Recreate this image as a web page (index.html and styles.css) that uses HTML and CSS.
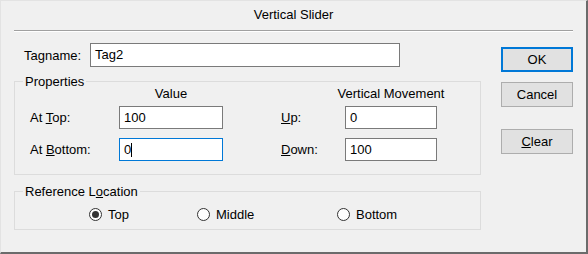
FILE: index.html
```html
<!DOCTYPE html>
<html>
<head>
<meta charset="utf-8">
<link rel="stylesheet" href="styles.css">
</head>
<body>
<div class="window">
  <div class="titlebar">Vertical Slider</div>
  <div class="main">
    <div class="left">
      <div class="tagrow">
        <span class="tag-label">Tagname:</span>
        <div class="field field-tag">Tag2</div>
      </div>
      <div class="group group-props">
        <span class="legend">Properties</span>
        <div class="props-grid">
          <span></span>
          <span class="colhead">Value</span>
          <span></span>
          <span></span>
          <span class="colhead">Vertical Movement</span>

          <span class="lbl">At <u>T</u>op:</span>
          <div class="field">100</div>
          <span></span>
          <span class="lbl"><u>U</u>p:</span>
          <div class="field">0</div>

          <span class="lbl">At <u>B</u>ottom:</span>
          <div class="field field-focus">0<span class="caret"></span></div>
          <span></span>
          <span class="lbl"><u>D</u>own:</span>
          <div class="field">100</div>
        </div>
      </div>
      <div class="group group-ref">
        <span class="legend">Reference L<u>o</u>cation</span>
        <div class="radios">
          <div class="radio radio-top"><span class="radio-dot checked"></span><span>Top</span></div>
          <div class="radio radio-mid"><span class="radio-dot"></span><span>Middle</span></div>
          <div class="radio"><span class="radio-dot"></span><span>Bottom</span></div>
        </div>
      </div>
    </div>
    <div class="buttons">
      <div class="btn btn-ok">OK</div>
      <div class="btn btn-cancel">Cancel</div>
      <div class="btn btn-clear"><u>C</u>lear</div>
    </div>
  </div>
</div>
</body>
</html>
```
FILE: styles.css
```css
html, body {
  margin: 0;
  padding: 0;
  background: #f0f0f0;
}

.window {
  width: 588px;
  height: 254px;
  box-sizing: border-box;
  background: #f0f0f0;
  border-style: solid;
  border-width: 1px 2px 2px 1px;
  border-color: #e3e3e3 #6b6b6b #6b6b6b #e3e3e3;
  font-family: "Liberation Sans", Arial, sans-serif;
  font-size: 13px;
  color: #000;
}

.titlebar {
  margin: 0 13px;
  height: 29px;
  line-height: 28px;
  text-align: center;
  border-bottom: 1px solid #a0a0a0;
  box-shadow: 0 1px 0 #ffffff;
}

.main {
  display: flex;
  padding-left: 13px;
}

.left {
  width: 467px;
}

.tagrow {
  display: flex;
  align-items: center;
  margin-top: 12px;
  padding-left: 10px;
}

.tag-label {
  width: 66px;
}

.field {
  box-sizing: border-box;
  height: 23px;
  border: 1px solid #7a7a7a;
  background: #fff;
  padding: 0 4px;
  line-height: 21px;
  white-space: nowrap;
}

.field-tag {
  width: 310px;
  height: 24px;
  line-height: 22px;
}

.field-focus {
  border-color: #0078d7;
}

.caret {
  display: inline-block;
  width: 1px;
  height: 14px;
  background: #000;
  vertical-align: -3px;
  margin-left: 0;
}

.group {
  border: 1px solid #dcdcdc;
}

.group-props {
  margin-top: 14px;
}

.group-ref {
  margin-top: 16px;
}

.legend {
  display: block;
  width: max-content;
  margin: -8px 0 0 8px;
  padding: 0 2px;
  background: #f0f0f0;
  line-height: 15px;
}

.props-grid {
  display: grid;
  grid-template-columns: 89px 104px 58px 64px 92px;
  grid-template-rows: 11px 23px 23px;
  row-gap: 9px;
  align-items: center;
  margin-top: -3px;
  padding: 0 0 13px 15px;
}

.colhead {
  align-self: start;
  line-height: 15px;
  text-align: center;
  margin: 0 -30px;
  white-space: nowrap;
}

.lbl {
  white-space: nowrap;
}

.radios {
  display: flex;
  align-items: center;
  height: 15px;
  margin-top: 8px;
  padding: 0 0 7px 74px;
}

.radio {
  display: flex;
  align-items: center;
  gap: 6px;
}

.radio-top {
  width: 108px;
}

.radio-mid {
  width: 140px;
}

.radio-dot {
  box-sizing: border-box;
  width: 13px;
  height: 13px;
  border: 1px solid #333;
  border-radius: 50%;
  background: #fff;
  display: flex;
  align-items: center;
  justify-content: center;
}

.radio-dot.checked::after {
  content: "";
  width: 7px;
  height: 7px;
  border-radius: 50%;
  background: #333;
}

.buttons {
  margin-left: 20px;
  width: 72px;
  padding-top: 16px;
  display: flex;
  flex-direction: column;
}

.btn {
  box-sizing: border-box;
  height: 25px;
  border: 1px solid #adadad;
  background: #e1e1e1;
  text-align: center;
  line-height: 23px;
}

.btn-ok {
  border-color: #0078d7;
  box-shadow: inset 0 0 0 1px #0078d7;
}

.btn-cancel {
  margin-top: 10px;
}

.btn-clear {
  margin-top: 22px;
}
```
